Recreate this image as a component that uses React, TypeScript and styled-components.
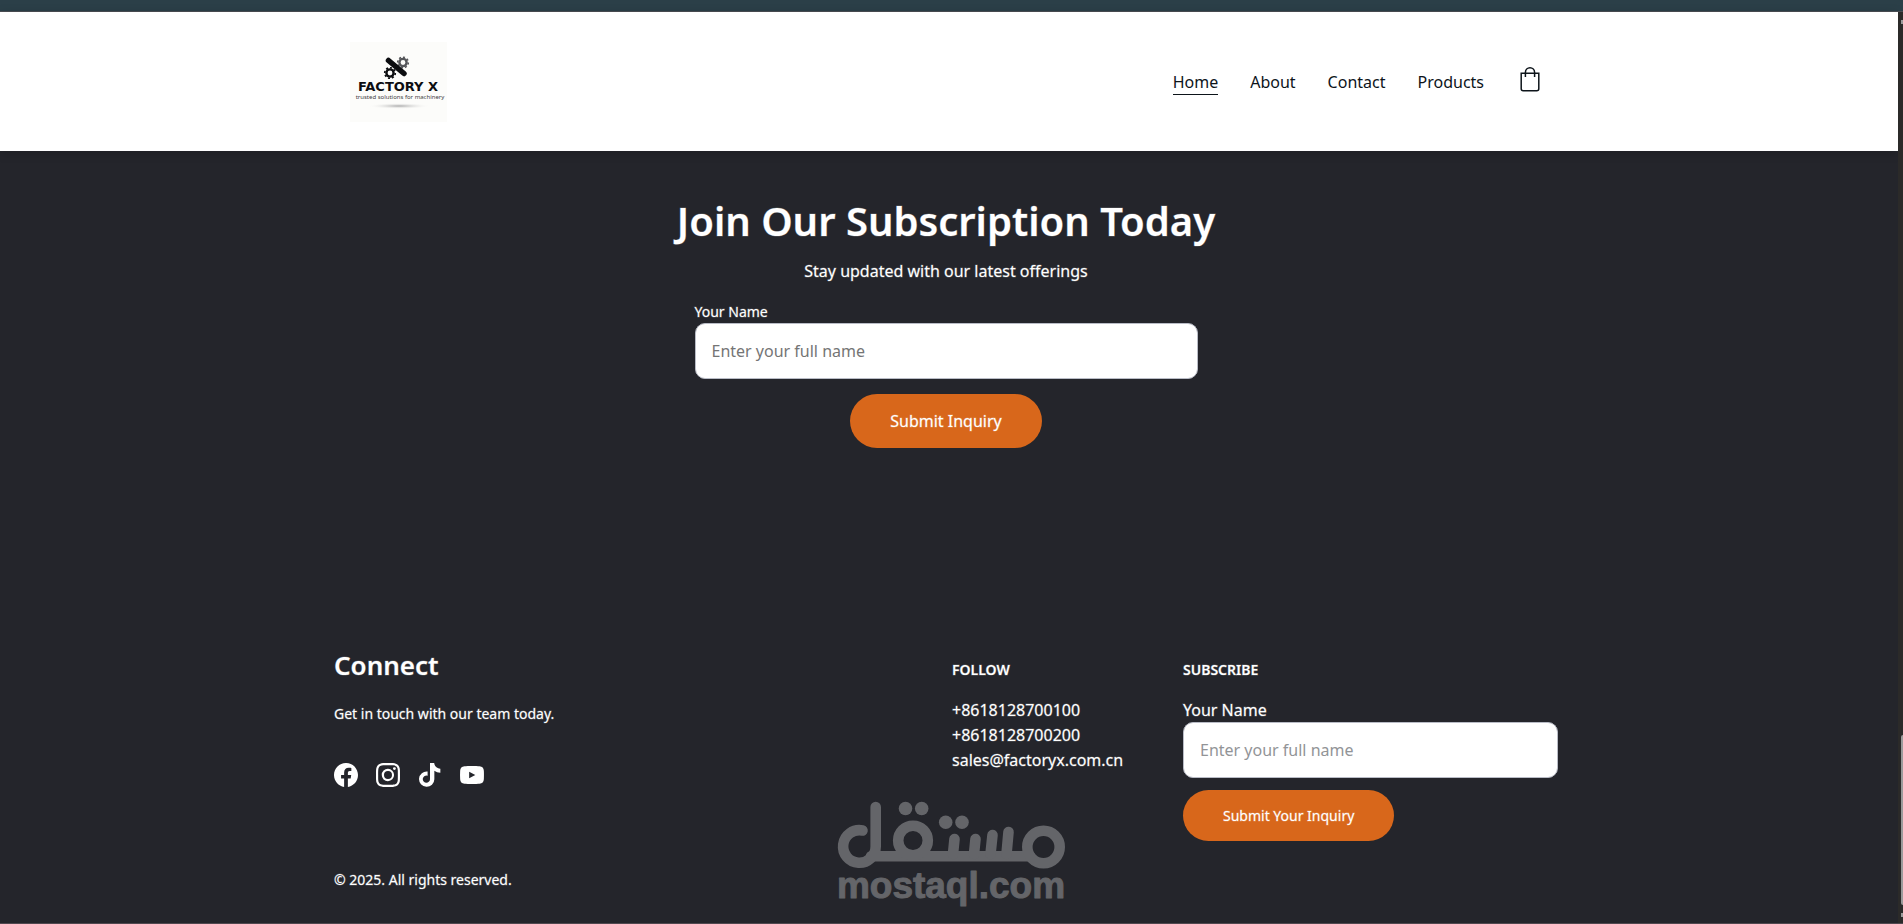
import React from "react";
import styled, { createGlobalStyle } from "styled-components";

const GlobalStyle = createGlobalStyle`
  * { box-sizing: border-box; }
  body {
    margin: 0;
    background: #24252b;
    color: #ffffff;
    font-family: "Noto Sans", "Open Sans", sans-serif;
    font-size: 16px;
    line-height: 24px;
  }
`;

const Window = styled.div`
  position: relative;
  min-height: 100vh;
  display: flex;
  flex-direction: column;
  border-bottom: 1px solid #50484f;
`;

const BrowserEdge = styled.div`
  height: 12px;
  background: #2b3f48;
  border-bottom: 1px solid #4b4f54;
`;

const Viewport = styled.div`
  flex: 1;
  display: flex;
`;

const Page = styled.div`
  flex: 1;
  min-width: 0;
  display: flex;
  flex-direction: column;
`;

const ScrollTrack = styled.div`
  width: 5px;
  display: flex;
  flex-direction: column;
  align-items: flex-end;
  padding: 8px 0 6px;
  background: #2b2a29;
`;

const ScrollArrow = styled.span`
  width: 2px;
  height: 4px;
  background: #9b9b9b;
`;

const ScrollThumb = styled.span`
  width: 2px;
  height: 170px;
  margin: auto 0 8px;
  border-radius: 2px 0 0 2px;
  background: #9b9b9b;
`;

const Header = styled.header`
  padding: 30px 24px 29px 16px;
  background: #ffffff;
  box-shadow: 0 2px 10px rgba(0, 0, 0, 0.18);
`;

const HeaderInner = styled.div`
  max-width: 1190px;
  margin: 0 auto;
  display: flex;
  align-items: center;
  justify-content: space-between;
`;

const LogoLink = styled.a`
  display: block;
  height: 80px;
`;

const Nav = styled.nav`
  display: flex;
  align-items: center;
  gap: 32px;
`;

const NavLink = styled.a<{ $active?: boolean }>`
  color: #0d141a;
  text-decoration: none;
  border-bottom: 1px solid ${(p) => (p.$active ? "#0d141a" : "transparent")};
`;

const BagButton = styled.button`
  display: flex;
  margin-left: 4px;
  padding: 0 0 6px;
  border: 0;
  background: none;
  color: #0d141a;
`;

const Hero = styled.main`
  flex: 1;
  display: flex;
  flex-direction: column;
  align-items: center;
  padding: 43px 22px 80px 16px;
  -webkit-text-stroke: 1px rgba(255, 255, 255, 0.25);
`;

const Title = styled.h1`
  margin: 0;
  font-size: 40px;
  line-height: 54px;
  font-weight: 600;
  text-align: center;
`;

const Subtitle = styled.p`
  margin: 11px 0 18px;
`;

const HeroForm = styled.form`
  width: 100%;
  max-width: 503px;
  display: flex;
  flex-direction: column;
  align-items: center;
  gap: 15px;
`;

const Field = styled.div`
  width: 100%;
  display: flex;
  flex-direction: column;
`;

const Label = styled.label<{ $small?: boolean }>`
  font-size: ${(p) => (p.$small ? 14 : 16)}px;
  line-height: ${(p) => (p.$small ? 22 : 24)}px;
`;

const TextInput = styled.input<{ $faded?: boolean }>`
  width: 100%;
  height: 56px;
  padding: 0 16px;
  border: 1px solid #b9bcc6;
  border-radius: 10px;
  background: #ffffff;
  color: #1d1e20;
  font: inherit;
  -webkit-text-stroke: 0;
  &::placeholder {
    color: ${(p) => (p.$faded ? "#929497" : "#757575")};
    opacity: 1;
  }
`;

const SubmitButton = styled.button<{ $small?: boolean }>`
  padding: ${(p) => (p.$small ? "15px 40px 14px" : "15px 40px")};
  border: 0;
  border-radius: 27px;
  background: #d8671b;
  color: #ffffff;
  font-family: inherit;
  font-size: ${(p) => (p.$small ? 14 : 16)}px;
  line-height: ${(p) => (p.$small ? 22 : 24)}px;
`;

const Footer = styled.footer`
  padding: 0 22px 32px 16px;
  -webkit-text-stroke: 1px rgba(255, 255, 255, 0.25);
`;

const FooterGrid = styled.div`
  max-width: 1224px;
  margin: 0 auto;
  display: grid;
  grid-template-columns: 618px 231px 1fr;
  grid-template-rows: auto auto;
`;

const Column = styled.section`
  display: flex;
  flex-direction: column;
  align-items: flex-start;
`;

const ConnectTitle = styled.h2`
  margin: 0 0 23px;
  font-size: 26px;
  line-height: 30px;
  font-weight: 600;
`;

const SmallText = styled.p`
  margin: 0;
  font-size: 14px;
  line-height: 22px;
`;

const Socials = styled.div`
  display: flex;
  gap: 18px;
  margin-top: 38px;
`;

const SocialLink = styled.a`
  display: block;
  height: 24px;
  color: #ffffff;
`;

const ColumnTitle = styled.h3`
  margin: 9px 0 17px;
  font-size: 14px;
  line-height: 22px;
  font-weight: 600;
`;

const ContactLine = styled.a`
  color: #ffffff;
  line-height: 25px;
  text-decoration: none;
`;

const ContactList = styled.div`
  display: flex;
  flex-direction: column;
`;

const FooterForm = styled.form`
  width: 100%;
  display: flex;
  flex-direction: column;
  align-items: flex-start;
  gap: 12px;
`;

const Copyright = styled(SmallText)`
  grid-column: 1 / -1;
  margin-top: 28px;
`;

const Watermark = styled.svg`
  position: absolute;
  left: 50%;
  bottom: 15px;
  margin-left: -116px;
  pointer-events: none;
`;

function Gear({ x, y, r, color }: { x: number; y: number; r: number; color: string }) {
  return (
    <g transform={`translate(${x} ${y})`} fill="none" stroke={color}>
      <circle r={r} strokeWidth="2.4" />
      <circle
        r={r + 1.7}
        strokeWidth="1.6"
        pathLength="32"
        strokeDasharray="2 2"
      />
    </g>
  );
}

function FactoryLogo() {
  return (
    <svg width="97" height="80" viewBox="0 0 97 80" role="img" aria-label="Factory X">
      <defs>
        <radialGradient id="logoShadow">
          <stop offset="0" stopColor="#aaa" />
          <stop offset="1" stopColor="#fcfcfa" stopOpacity="0" />
        </radialGradient>
      </defs>
      <rect width="97" height="80" fill="#fcfcfa" />
      <Gear x={53} y={20.5} r={3.6} color="#55565a" />
      <Gear x={40} y={31} r={3.6} color="#0c0d10" />
      <path d="M38.500 18.500 54 31.500" stroke="#0c0d10" strokeWidth="5.500" strokeLinecap="round" />
      <text
        x="48"
        y="49"
        textAnchor="middle"
        fontFamily="DejaVu Sans"
        fontWeight="700"
        fontSize="13"
        fill="#0c0d10"
      >
        FACTORY X
      </text>
      <text
        x="50"
        y="57"
        textAnchor="middle"
        fontFamily="Noto Sans"
        fontSize="6"
        fill="#3f4044"
      >
        trusted solutions for machinery
      </text>
      <ellipse cx="49" cy="64" rx="31" ry="3" fill="url(#logoShadow)" />
    </svg>
  );
}

function BagIcon() {
  return (
    <svg width="20" height="25" viewBox="0 0 20 25" fill="none" stroke="currentColor" strokeWidth="1.5">
      <path d="M1.2 6.2h17.6v15.6a2 2 0 0 1-2 2H3.2a2 2 0 0 1-2-2z" />
      <path d="M5.4 10V5.4a4.6 4.6 0 0 1 9.2 0V10" />
    </svg>
  );
}

const socials = [
  {
    name: "Facebook",
    path: "M16 8.049c0-4.446-3.582-8.05-8-8.05C3.58 0-.002 3.603-.002 8.05c0 4.017 2.926 7.347 6.75 7.951v-5.625h-2.03V8.05H6.75V6.275c0-2.017 1.195-3.131 3.022-3.131.876 0 1.791.157 1.791.157v1.98h-1.009c-.993 0-1.303.621-1.303 1.258v1.51h2.218l-.354 2.326H9.25V16c3.824-.604 6.75-3.934 6.75-7.951",
  },
  {
    name: "Instagram",
    path: "M8 0C5.829 0 5.556.01 4.703.048 3.85.088 3.269.222 2.76.42a3.9 3.9 0 0 0-1.417.923A3.9 3.9 0 0 0 .42 2.76C.222 3.268.087 3.85.048 4.7.01 5.555 0 5.827 0 8.001c0 2.172.01 2.444.048 3.297.04.852.174 1.433.372 1.942.205.526.478.972.923 1.417.444.445.89.719 1.416.923.51.198 1.09.333 1.942.372C5.555 15.99 5.827 16 8 16s2.444-.01 3.298-.048c.851-.04 1.434-.174 1.943-.372a3.9 3.9 0 0 0 1.416-.923c.445-.445.718-.891.923-1.417.197-.509.332-1.09.372-1.942C15.99 10.445 16 10.173 16 8s-.01-2.445-.048-3.299c-.04-.851-.175-1.433-.372-1.941a3.9 3.9 0 0 0-.923-1.417A3.9 3.9 0 0 0 13.24.42c-.51-.198-1.092-.333-1.943-.372C10.443.01 10.172 0 7.998 0zm-.717 1.442h.718c2.136 0 2.389.007 3.232.046.78.035 1.204.166 1.486.275.373.145.64.319.92.599s.453.546.598.92c.11.281.24.705.275 1.485.039.843.047 1.096.047 3.231s-.008 2.389-.047 3.232c-.035.78-.166 1.203-.275 1.485a2.5 2.5 0 0 1-.599.919c-.28.28-.546.453-.92.598-.28.11-.704.24-1.485.276-.843.038-1.096.047-3.232.047s-2.39-.009-3.233-.047c-.78-.036-1.203-.166-1.485-.276a2.5 2.5 0 0 1-.92-.598 2.5 2.5 0 0 1-.6-.92c-.109-.281-.24-.705-.275-1.485-.038-.843-.046-1.096-.046-3.233s.008-2.388.046-3.231c.036-.78.166-1.204.276-1.486.145-.373.319-.64.599-.92s.546-.453.92-.598c.282-.11.705-.24 1.485-.276.738-.034 1.024-.044 2.515-.045zm4.988 1.328a.96.96 0 1 0 0 1.92.96.96 0 0 0 0-1.92m-4.27 1.122a4.109 4.109 0 1 0 0 8.217 4.109 4.109 0 0 0 0-8.217m0 1.441a2.667 2.667 0 1 1 0 5.334 2.667 2.667 0 0 1 0-5.334",
  },
  {
    name: "TikTok",
    path: "M8 0h2.800c.100 1.800 1.700 3.700 4.100 3.800v2.700c-1.500 0-2.900-.5-4-1.300v5.600A5.100 5.100 0 1 1 6.400 5.700v2.800A2.400 2.400 0 1 0 8 10.800z",
  },
  {
    name: "YouTube",
    path: "M3 2.1C5 1.9 11 1.9 13 2.1c1.9.2 2.8 1.1 2.9 3 .1 1.8.1 4 0 5.8-.1 1.9-1 2.8-2.9 3-2 .2-8 .2-10 0-1.9-.2-2.8-1.1-2.9-3C0 9.1 0 6.9.1 5.1.2 3.200 1.100 2.300 3 2.100zM6.100 5.900v4.200L10.200 8z",
  },
];

function MostaqlMark() {
  return (
    <Watermark width="230" height="108" viewBox="0 0 230 108" role="img" aria-label="mostaql.com">
      <g fill="none" stroke="#646569" strokeWidth="10.600" strokeLinecap="round">
        <path d="M26.500 30.500A16.300 16.300 0 1 0 39.700 46.500V7" />
        <path d="M35 56.200H194" />
        <circle cx="77" cy="40.500" r="14.800" />
        <circle cx="207.500" cy="47" r="16.200" />
        <path d="M117 54 118.500 39M138 54 139.500 39M154.500 54 156.500 35M170.500 54 172.500 32" />
      </g>
      <g fill="#646569">
        <circle cx="69.500" cy="8.500" r="6.800" />
        <circle cx="85.700" cy="8.500" r="6.800" />
        <circle cx="109.700" cy="22.300" r="6.800" />
        <circle cx="126" cy="22.300" r="6.800" />
        <text
          x="115"
          y="98"
          textAnchor="middle"
          fontFamily="Liberation Sans"
          fontWeight="700"
          fontSize="37"
          stroke="#646569"
          strokeWidth="1"
          strokeLinejoin="round"
        >
          mostaql.com
        </text>
      </g>
    </Watermark>
  );
}

export default function App() {
  return (
    <>
      <GlobalStyle />
      <Window>
        <BrowserEdge />
        <Viewport>
          <Page>
            <Header>
              <HeaderInner>
                <LogoLink href="#">
                  <FactoryLogo />
                </LogoLink>
                <Nav>
                  <NavLink href="#" $active>Home</NavLink>
                  <NavLink href="#about">About</NavLink>
                  <NavLink href="#contact">Contact</NavLink>
                  <NavLink href="#products">Products</NavLink>
                  <BagButton type="button" aria-label="Shopping bag">
                    <BagIcon />
                  </BagButton>
                </Nav>
              </HeaderInner>
            </Header>
            <Hero>
              <Title>Join Our Subscription Today</Title>
              <Subtitle>Stay updated with our latest offerings</Subtitle>
              <HeroForm>
                <Field>
                  <Label $small htmlFor="hero-name">Your Name</Label>
                  <TextInput id="hero-name" placeholder="Enter your full name" />
                </Field>
                <SubmitButton type="button">Submit Inquiry</SubmitButton>
              </HeroForm>
            </Hero>
            <Footer>
              <FooterGrid>
                <Column>
                  <ConnectTitle>Connect</ConnectTitle>
                  <SmallText>Get in touch with our team today.</SmallText>
                  <Socials>
                    {socials.map((s) => (
                      <SocialLink key={s.name} href="#" aria-label={s.name}>
                        <svg width="24" height="24" viewBox="0 0 16 16" fill="currentColor" fillRule="evenodd">
                          <path d={s.path} />
                        </svg>
                      </SocialLink>
                    ))}
                  </Socials>
                </Column>
                <Column>
                  <ColumnTitle>FOLLOW</ColumnTitle>
                  <ContactList>
                    <ContactLine href="tel:+8618128700100">+8618128700100</ContactLine>
                    <ContactLine href="tel:+8618128700200">+8618128700200</ContactLine>
                    <ContactLine href="mailto:sales@factoryx.com.cn">sales@factoryx.com.cn</ContactLine>
                  </ContactList>
                </Column>
                <Column>
                  <ColumnTitle>SUBSCRIBE</ColumnTitle>
                  <FooterForm>
                    <Field>
                      <Label htmlFor="footer-name">Your Name</Label>
                      <TextInput $faded id="footer-name" placeholder="Enter your full name" />
                    </Field>
                    <SubmitButton $small type="button">Submit Your Inquiry</SubmitButton>
                  </FooterForm>
                </Column>
                <Copyright>© 2025. All rights reserved.</Copyright>
              </FooterGrid>
            </Footer>
          </Page>
          <ScrollTrack>
            <ScrollArrow />
            <ScrollThumb />
            <ScrollArrow />
          </ScrollTrack>
        </Viewport>
        <MostaqlMark />
      </Window>
    </>
  );
}
